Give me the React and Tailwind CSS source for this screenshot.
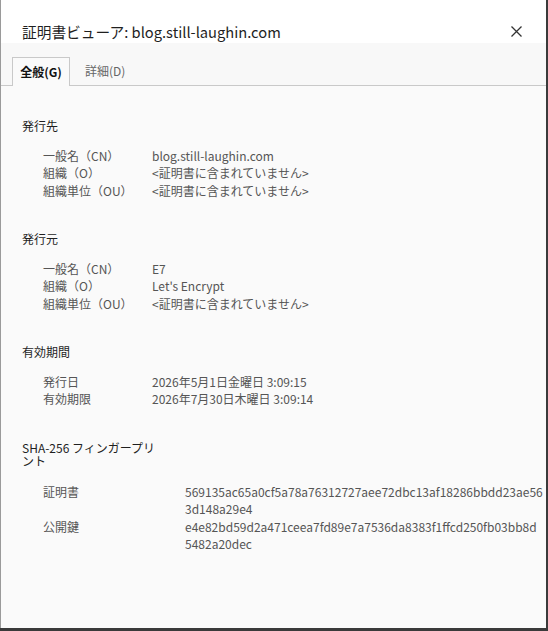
import React from "react";

const font = { fontFamily: '"Noto Sans CJK JP", "Noto Sans", sans-serif' };

function Row({ label, value, labelW = "w-[109px]" }) {
  return (
    <div className="flex">
      <div className={`${labelW} shrink-0`}>{label}</div>
      <div>{value}</div>
    </div>
  );
}

export default function App() {
  return (
    <div className="w-[548px] h-[631px] bg-[#3a3a3a] overflow-hidden" style={font}>
      <div className="w-[546px] h-[628px] bg-[#fafafa] border-l border-[#9a9a9a] flex flex-col">
        <div className="h-[43px] bg-white flex items-start justify-between pl-[21px] pr-[24px] pt-[20px]">
          <div className="text-[14.7px] leading-[24px] text-[#1f1f1f]">証明書ビューア: blog.still-laughin.com</div>
          <svg width="11" height="11" viewBox="0 0 11 11" className="mt-[6px]">
            <path d="M0.5 0.5 L10.5 10.5 M10.5 0.5 L0.5 10.5" stroke="#333" strokeWidth="1.3" />
          </svg>
        </div>
        <div className="h-[43px] bg-[#f8f8f8] border-b border-[#c9c9c9] flex items-end pl-[11px]">
          <div className="h-[29px] w-[58px] border border-b-0 border-[#c9c9c9] bg-[#fafafa] -mb-px flex items-center justify-center text-[12px] font-bold text-[#111]">
            全般(G)
          </div>
          <div className="h-[28px] px-[15px] flex items-center text-[12px] text-[#666]">詳細(D)</div>
        </div>
        <div className="pl-[21px] pt-[31px] text-[12px] leading-[17.5px] text-[#555]">
          <div className="text-[#1f1f1f]">発行先</div>
          <div className="mt-[12px] pl-[21px]">
            <Row label="一般名（CN）" value="blog.still-laughin.com" />
            <Row label="組織（O）" value="<証明書に含まれていません>" />
            <Row label="組織単位（OU）" value="<証明書に含まれていません>" />
          </div>

          <div className="mt-[31px] text-[#1f1f1f]">発行元</div>
          <div className="mt-[12px] pl-[21px]">
            <Row label="一般名（CN）" value="E7" />
            <Row label="組織（O）" value="Let's Encrypt" />
            <Row label="組織単位（OU）" value="<証明書に含まれていません>" />
          </div>

          <div className="mt-[31px] text-[#1f1f1f]">有効期間</div>
          <div className="mt-[12px] pl-[21px]">
            <Row label="発行日" value="2026年5月1日金曜日 3:09:15" />
            <Row label="有効期限" value="2026年7月30日木曜日 3:09:14" />
          </div>

          <div className="mt-[33px] text-[#1f1f1f] leading-[13px]">
            <div>SHA-256 フィンガープリ</div>
            <div>ント</div>
          </div>
          <div className="mt-[16px] pl-[21px]">
            <Row
              labelW="w-[142px]"
              label="証明書"
              value={
                <>
                  <div>569135ac65a0cf5a78a76312727aee72dbc13af18286bbdd23ae56</div>
                  <div>3d148a29e4</div>
                </>
              }
            />
            <Row
              labelW="w-[142px]"
              label="公開鍵"
              value={
                <>
                  <div>e4e82bd59d2a471ceea7fd89e7a7536da8383f1ffcd250fb03bb8d</div>
                  <div>5482a20dec</div>
                </>
              }
            />
          </div>
        </div>
      </div>
    </div>
  );
}
